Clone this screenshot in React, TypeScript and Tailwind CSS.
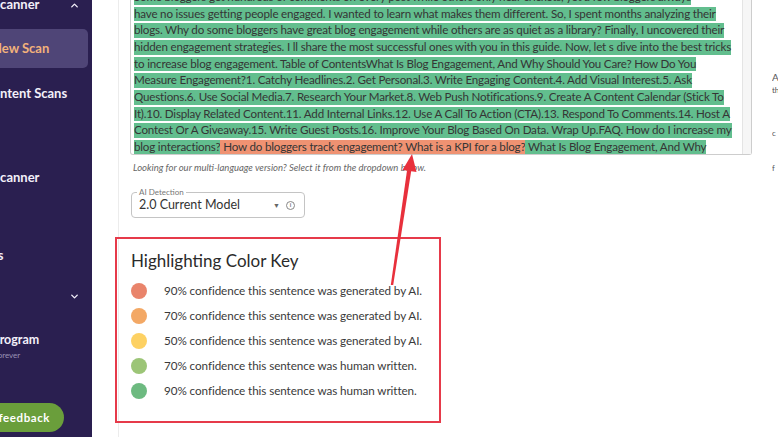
import { ChevronDown, ChevronUp } from "lucide-react";

type Seg = { t: string; c: "g" | "o" };

const scanLines: Seg[][] = [
  [{ t: "Some bloggers get hundreds of comments on every post while others only hear crickets, yet a few bloggers always", c: "g" }],
  [{ t: "have no issues getting people engaged. I wanted to learn what makes them different. So, I spent months analyzing their", c: "g" }],
  [{ t: "blogs. Why do some bloggers have great blog engagement while others are as quiet as a library? Finally, I uncovered their", c: "g" }],
  [{ t: "hidden engagement strategies. I ll share the most successful ones with you in this guide. Now, let s dive into the best tricks", c: "g" }],
  [{ t: "to increase blog engagement. Table of ContentsWhat Is Blog Engagement, And Why Should You Care? How Do You", c: "g" }],
  [{ t: "Measure Engagement?1. Catchy Headlines.2. Get Personal.3. Write Engaging Content.4. Add Visual Interest.5. Ask", c: "g" }],
  [{ t: "Questions.6. Use Social Media.7. Research Your Market.8. Web Push Notifications.9. Create A Content Calendar (Stick To", c: "g" }],
  [{ t: "It).10. Display Related Content.11. Add Internal Links.12. Use A Call To Action (CTA).13. Respond To Comments.14. Host A", c: "g" }],
  [{ t: "Contest Or A Giveaway.15. Write Guest Posts.16. Improve Your Blog Based On Data. Wrap Up.FAQ. How do I increase my", c: "g" }],
  [
    { t: "blog interactions?", c: "g" },
    { t: " How do bloggers track engagement? What is a KPI for a blog?", c: "o" },
    { t: " What Is Blog Engagement, And Why", c: "g" },
  ],
];

const colorKey = [
  { dot: "bg-[#e9846b]", label: "90% confidence this sentence was generated by AI." },
  { dot: "bg-[#f3a865]", label: "70% confidence this sentence was generated by AI." },
  { dot: "bg-[#fdd163]", label: "50% confidence this sentence was generated by AI." },
  { dot: "bg-[#9cc577]", label: "70% confidence this sentence was human written." },
  { dot: "bg-[#6dba80]", label: "90% confidence this sentence was human written." },
];

function Sidebar() {
  return (
    <aside className="flex w-[92px] shrink-0 flex-col overflow-hidden bg-[#2a1f50] text-[13px] font-bold text-[#f3f0fa]">
      {/* Scanner group */}
      <div className="-mt-[5px] flex h-[20px] items-center justify-between pr-[12px]">
        <span className="-ml-[7px] whitespace-nowrap">Scanner</span>
        <ChevronUp size={11} strokeWidth={3} />
      </div>
      <div className="mr-[4px] -ml-[20px] mt-[14px] flex h-[39px] items-center rounded-[5px] bg-[#4f4577] pl-[12px] text-[#f2b27b]">
        <span className="whitespace-nowrap">New Scan</span>
      </div>
      <div className="mt-[6px] flex h-[40px] items-center">
        <span className="-ml-[16px] whitespace-nowrap">Content Scans</span>
      </div>

      <div className="mt-[44px] flex h-[40px] items-center">
        <span className="-ml-[7px] whitespace-nowrap">Scanner</span>
      </div>
      <div className="mt-[38px] flex h-[40px] items-center">
        <span className="-ml-[33px] whitespace-nowrap">Teams</span>
      </div>
      <div className="flex h-[40px] items-center justify-end pr-[12px]">
        <ChevronDown size={11} strokeWidth={3} />
      </div>

      {/* Affiliate */}
      <div className="mt-[16px] flex flex-col">
        <span className="-ml-[8px] whitespace-nowrap text-[12.5px] leading-[16px]">Program</span>
        <span className="-ml-[5px] mt-[1px] whitespace-nowrap text-[8px] font-normal leading-[12px] text-[#9a93b5]">forever</span>
      </div>

      <div className="-ml-[40px] mt-[42px] flex h-[29px] w-[104px] shrink-0 items-center justify-end rounded-full bg-[#6a9e3b] pr-[14px] text-[11.5px] tracking-[0.05em] text-white">
        <span className="whitespace-nowrap">Give feedback</span>
      </div>
    </aside>
  );
}

function ScanText() {
  return (
    <div className="flex h-[155px] w-[622px] shrink-0 rounded-b-[3px] border-x border-b border-[#cdcdcd]">
      <div className="min-w-0 flex-1 overflow-hidden pl-[3px]">
        <div className="-mt-[11px] flex flex-col text-[11.6px] tracking-[-0.18px] text-[#353535]">
          {scanLines.map((line, i) => (
            <div key={i} className="flex h-[16.67px] items-center whitespace-pre">
              {line.map((s, j) => (
                <span
                  key={j}
                  className={`h-[14.6px] leading-[14.6px] ${s.c === "g" ? "bg-[#62be8e]" : "bg-[#ef9272]"}`}
                >
                  {s.t}
                </span>
              ))}
            </div>
          ))}
        </div>
      </div>
      <div className="w-[9px] shrink-0 border-l border-[#e4e4e4] bg-[#f6f6f6]" />
    </div>
  );
}

function ModelSelect() {
  return (
    <div className="relative ml-[1px] mt-[19px] flex h-[26px] w-[174px] items-center rounded-[4px] border border-[#c4c4c4] pl-[7px]">
      <span className="absolute -top-[6px] left-[5px] bg-white px-[2px] text-[8px] leading-[10px] text-[#777]">
        AI Detection
      </span>
      <span className="flex-1 text-[12.5px] text-[#333]">2.0 Current Model</span>
      <span className="mr-[6px] text-[7px] text-[#666]">▼</span>
      <span className="mr-[9px] flex h-[9px] w-[9px] items-center justify-center rounded-full border border-[#888] text-[6px] font-bold leading-none text-[#777]">
        i
      </span>
    </div>
  );
}

function ColorKey() {
  return (
    <div className="-ml-[15px] mt-[19px] h-[186px] w-[326px] border-2 border-[#e63a4a] pl-[14px] pt-[12px]">
      <h2 className="text-[17px] leading-[20px] text-[#2b2b2b]">Highlighting Color Key</h2>
      <div className="mt-[12px] flex flex-col gap-[9px]">
        {colorKey.map((k) => (
          <div key={k.label} className="flex h-[16px] items-center gap-[17px]">
            <span className={`h-[16px] w-[16px] shrink-0 rounded-full ${k.dot}`} />
            <span className="whitespace-nowrap text-[11.7px] tracking-[-0.08px] text-[#3a3a3a]">{k.label}</span>
          </div>
        ))}
      </div>
    </div>
  );
}

export default function App() {
  return (
    <div className="relative flex h-[437px] w-[778px] overflow-hidden bg-white font-['Lato',sans-serif]">
      <Sidebar />
      <main className="flex min-w-0 flex-1 pl-[26px]">
        <div className="flex min-w-0 flex-1 border-l border-[#ececec] pl-[11px]">
          <div className="flex w-[622px] shrink-0 flex-col">
            <ScanText />
            <p className="ml-[3px] mt-[7px] text-[9.5px] italic leading-[11px] text-[#666]">
              Looking for our multi-language version? Select it from the dropdown below.
            </p>
            <ModelSelect />
            <ColorKey />
          </div>
          <div className="ml-[20px] flex min-w-0 flex-1 flex-col overflow-hidden whitespace-nowrap pt-[71px] text-[#555]">
            <span className="text-[10px] leading-[13px]">AI</span>
            <span className="text-[8px] leading-[12px]">th</span>
            <span className="mt-[31px] text-[8px] leading-[12px]">c</span>
            <span className="mt-[23px] text-[8px] leading-[12px]">f</span>
          </div>
        </div>
      </main>

      {/* annotation arrow */}
      <svg className="pointer-events-none absolute inset-0" width="778" height="437" viewBox="0 0 778 437">
        <polygon points="390.8,285 393.2,285 411.2,171 407,170.6" fill="#e8303c" />
        <polygon points="412,154 416.5,172 402.5,170" fill="#e8303c" />
      </svg>
    </div>
  );
}
